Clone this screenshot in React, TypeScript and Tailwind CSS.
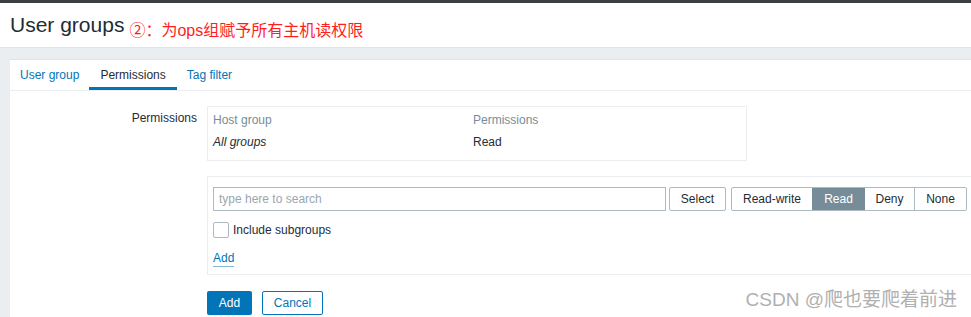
import React from 'react';

const levels = ['Read-write', 'Read', 'Deny', 'None'];

const App: React.FC = () => {
  return (
    <div className="relative h-[317px] w-full overflow-hidden bg-[#ebeef0] text-[12px] text-[#1f2c33] font-['Liberation_Sans',Arial,sans-serif]">
      <div className="h-[3px] bg-[#3b3f42]" />

      {/* Page header */}
      <div className="flex h-[45px] items-center border-b border-[#dfe4e7] bg-white pl-[10px]">
        <h1 className="pb-[1px] text-[21px] leading-none text-[#1f2c33]">User groups</h1>
        <span className="ml-[5px] mt-[9px] text-[16px] leading-none text-[#ff1d1d] font-['Noto_Sans_CJK_SC',sans-serif]">
          ②：为<span className="font-['Liberation_Sans',sans-serif]">ops</span>组赋予所有主机读权限
        </span>
      </div>

      {/* Card */}
      <div className="ml-[10px] mt-[11px] h-full border-t border-[#dfe4e7] bg-white">
        <div className="flex h-[31px] border-b border-[#ebeef0]">
          <div className="flex items-center px-[10px] text-[#0275b8]">User group</div>
          <div className="flex items-center border-b-[3px] border-[#0275b8] px-[11px] pt-[3px]">Permissions</div>
          <div className="flex items-center px-[10px] text-[#0275b8]">Tag filter</div>
        </div>

        <div className="flex pt-[15px]">
          <div className="w-[187px] shrink-0 pt-[3px] text-right">Permissions</div>
          <div className="ml-[10px] flex-1">
            {/* Existing permissions */}
            <div className="w-[540px] border border-[#ebeef0] px-[5px] pb-[11px] pt-[6px]">
              <div className="flex h-[14px] items-center text-[#768d99]">
                <div className="w-[260px]">Host group</div>
                <div>Permissions</div>
              </div>
              <div className="mt-[8px] flex h-[14px] items-center">
                <div className="w-[260px] italic">All groups</div>
                <div>Read</div>
              </div>
            </div>

            {/* Add new permission */}
            <div className="mt-[15px] h-[99px] w-[800px] border border-[#ebeef0] px-[5px] pt-[10px]">
              <div className="flex items-center">
                <div className="flex h-[24px] w-[453px] items-center border border-[#acbbc2] px-[5px] text-[#9aa7ae]">
                  type here to search
                </div>
                <button className="ml-[3px] h-[24px] w-[57px] rounded-[2px] border border-[#acbbc2] bg-white">Select</button>
                <div className="ml-[5px] flex h-[24px] overflow-hidden rounded-[2px] border border-[#acbbc2]">
                  {levels.map((l, i) => (
                    <div
                      key={l}
                      className={
                        l === 'Read'
                          ? 'flex w-[53px] items-center justify-center bg-[#768d99] text-white'
                          : i === 0
                          ? 'flex w-[80px] items-center justify-center'
                          : i === 2
                          ? 'flex w-[50px] items-center justify-center border-r border-[#acbbc2]'
                          : 'flex w-[51px] items-center justify-center'
                      }
                    >
                      {l}
                    </div>
                  ))}
                </div>
              </div>
              <div className="mt-[10px] flex items-center">
                <div className="h-[16px] w-[16px] rounded-[2px] border border-[#acbbc2]" />
                <span className="ml-[4px]">Include subgroups</span>
              </div>
              <div className="mt-[10px]">
                <span className="border-b border-[#80b9dc] pb-[1px] text-[#0275b8]">Add</span>
              </div>
            </div>

            <div className="mt-[16px] flex">
              <button className="h-[24px] w-[45px] rounded-[2px] bg-[#0275b8] text-white">Add</button>
              <button className="ml-[10px] h-[24px] w-[61px] rounded-[2px] border border-[#0275b8] bg-white text-[#0275b8]">Cancel</button>
            </div>
          </div>
        </div>
      </div>

      {/* Watermark */}
      <div className="absolute bottom-[8px] right-[14px] text-[19px] leading-none text-[#b0b0b0] font-['Liberation_Sans','Noto_Sans_CJK_SC',sans-serif]">
        CSDN @爬也要爬着前进
      </div>
    </div>
  );
};

export default App;
